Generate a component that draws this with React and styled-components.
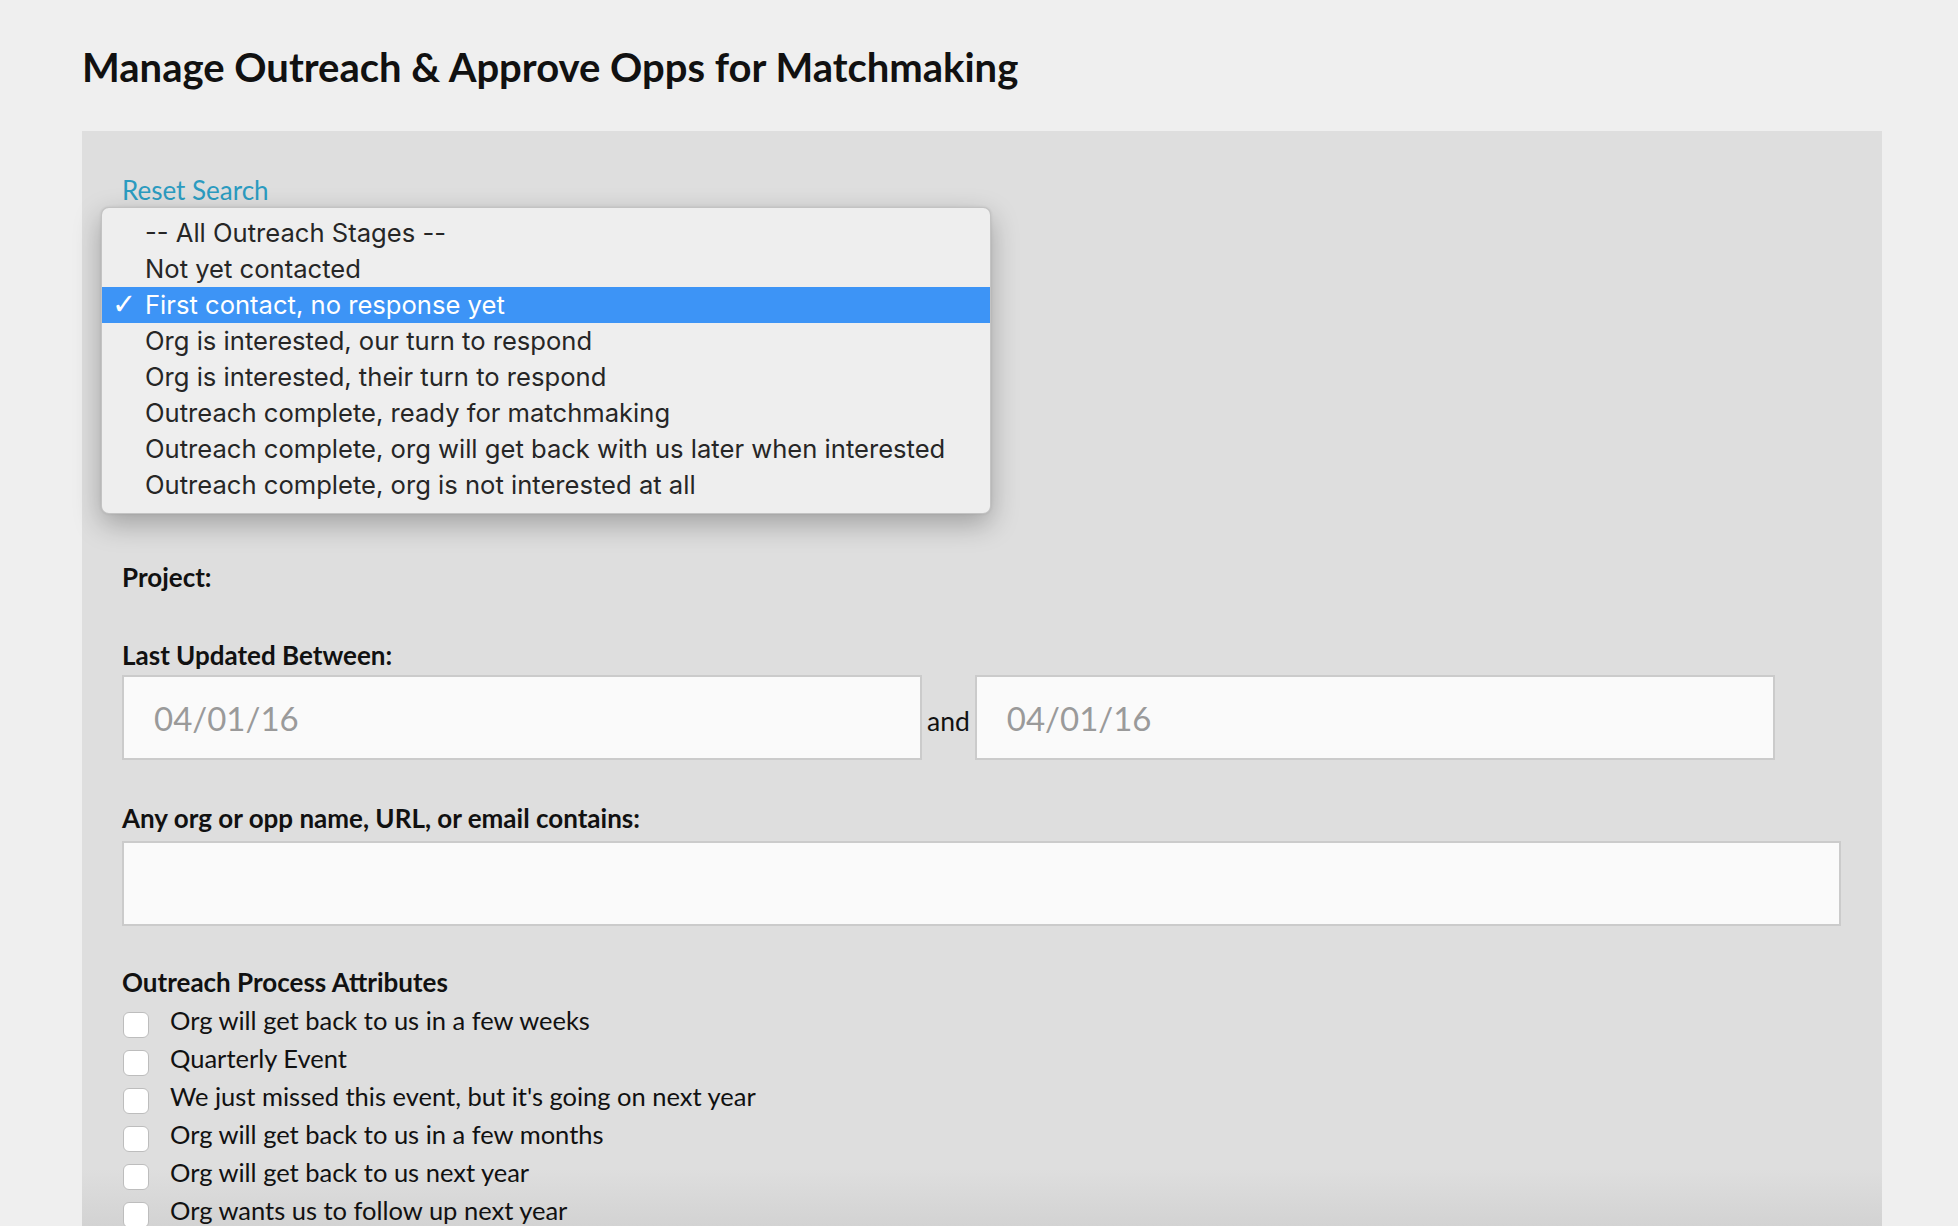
import React from 'react';
import styled, { createGlobalStyle } from 'styled-components';

const GlobalStyle = createGlobalStyle`
  html, body {
    margin: 0;
    padding: 0;
    background: #efefef;
    font-family: Lato, "Open Sans", sans-serif;
    color: #111;
  }
  * { box-sizing: border-box; }
`;

const Page = styled.div`
  height: 100vh;
  overflow: hidden;
  display: flex;
  flex-direction: column;
  padding: 43px 76px 0 82px;
`;

const Title = styled.h1`
  margin: 0 0 40px;
  font-size: 40px;
  line-height: 48px;
  font-weight: 700;
  color: #111;
`;

const Panel = styled.div`
  flex: 1;
  padding: 44px 41px 0 40px;
  background: linear-gradient(to bottom, #dedede calc(100% - 60px), #d2d2d2 100%);
`;

const ResetLink = styled.a`
  display: block;
  font-size: 26px;
  line-height: 30px;
  color: #2b9bc0;
  text-decoration: none;
  cursor: pointer;
`;

const StageField = styled.div`
  position: relative;
  height: 357px;
`;

const StageMenu = styled.ul`
  position: absolute;
  top: 2px;
  left: -21px;
  width: 890px;
  margin: 0;
  padding: 7px 0 10px;
  list-style: none;
  background: #eeeeee;
  border: 1px solid rgba(0, 0, 0, 0.18);
  border-radius: 8px;
  box-shadow: 0 10px 28px rgba(0, 0, 0, 0.28), 0 0 3px rgba(0, 0, 0, 0.1);
  font-family: Inter, "Open Sans", sans-serif;
  z-index: 10;
`;

const StageOption = styled.li`
  position: relative;
  height: 36px;
  line-height: 36px;
  padding-left: 43px;
  font-size: 25.6px;
  color: ${(p) => (p.selected ? '#fff' : '#262626')};
  background: ${(p) => (p.selected ? '#3d94f6' : 'transparent')};
  white-space: nowrap;
`;

const Check = styled.span`
  position: absolute;
  left: 10px;
  top: -1px;
  font-family: "DejaVu Sans", sans-serif;
  font-size: 29px;
  font-weight: 700;
`;

const Field = styled.div`
  margin-bottom: ${(p) => p.gap || 0}px;
`;

const Label = styled.div`
  font-size: 26px;
  line-height: 1.2;
  font-weight: 700;
  margin-bottom: ${(p) => p.space || 0}px;
`;

const DateRow = styled.div`
  display: flex;
  align-items: baseline;
`;

const TextInput = styled.input`
  display: block;
  width: ${(p) => p.width || '100%'};
  height: 85px;
  padding: 0 0 0 30px;
  border: 2px solid #cbcbcb;
  background: #fafafa;
  font-family: Lato, sans-serif;
  font-size: 33px;
  color: #333;
  outline: none;
  &::placeholder {
    color: #9a9a9a;
  }
`;

const And = styled.span`
  margin: 0 5px;
  font-size: 26.5px;
  color: #111;
`;

const CheckRow = styled.label`
  display: flex;
  align-items: flex-start;
  height: 38px;
  font-size: 25.5px;
  line-height: 38px;
  color: #111;
`;

const CheckBox = styled.span`
  flex: none;
  width: 26px;
  height: 26px;
  margin: 11px 21px 0 1px;
  background: #fff;
  border: 1px solid #bdbdbd;
  border-radius: 6px;
`;

const Attributes = styled.div`
  margin-top: 3px;
`;

const stages = [
  '-- All Outreach Stages --',
  'Not yet contacted',
  'First contact, no response yet',
  'Org is interested, our turn to respond',
  'Org is interested, their turn to respond',
  'Outreach complete, ready for matchmaking',
  'Outreach complete, org will get back with us later when interested',
  'Outreach complete, org is not interested at all',
];

const attributes = [
  'Org will get back to us in a few weeks',
  'Quarterly Event',
  "We just missed this event, but it's going on next year",
  'Org will get back to us in a few months',
  'Org will get back to us next year',
  'Org wants us to follow up next year',
];

export default function App() {
  return (
    <>
      <GlobalStyle />
      <Page>
        <Title>Manage Outreach &amp; Approve Opps for Matchmaking</Title>
        <Panel>
          <ResetLink>Reset Search</ResetLink>
          <StageField>
            <StageMenu>
              {stages.map((s, i) => (
                <StageOption key={s} selected={i === 2}>
                  {i === 2 && <Check>✓</Check>}
                  {s}
                </StageOption>
              ))}
            </StageMenu>
          </StageField>
          <Field gap={47}>
            <Label>Project:</Label>
          </Field>
          <Field gap={43}>
            <Label space={4}>Last Updated Between:</Label>
            <DateRow>
              <TextInput width="800px" placeholder="04/01/16" />
              <And>and</And>
              <TextInput width="800px" placeholder="04/01/16" />
            </DateRow>
          </Field>
          <Field gap={41}>
            <Label space={6}>Any org or opp name, URL, or email contains:</Label>
            <TextInput />
          </Field>
          <Label>Outreach Process Attributes</Label>
          <Attributes>
            {attributes.map((a) => (
              <CheckRow key={a}>
                <CheckBox />
                {a}
              </CheckRow>
            ))}
          </Attributes>
        </Panel>
      </Page>
    </>
  );
}
